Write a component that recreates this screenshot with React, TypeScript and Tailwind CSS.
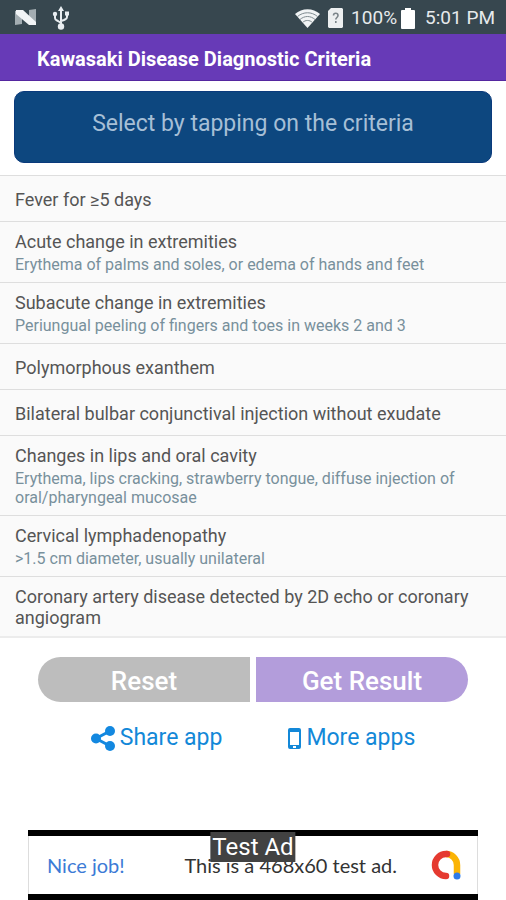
import { useState } from "react";

type Criterion = { title: string; detail?: string };

const criteria: Criterion[] = [
  { title: "Fever for ≥5 days" },
  {
    title: "Acute change in extremities",
    detail: "Erythema of palms and soles, or edema of hands and feet",
  },
  {
    title: "Subacute change in extremities",
    detail: "Periungual peeling of fingers and toes in weeks 2 and 3",
  },
  { title: "Polymorphous exanthem" },
  { title: "Bilateral bulbar conjunctival injection without exudate" },
  {
    title: "Changes in lips and oral cavity",
    detail:
      "Erythema, lips cracking, strawberry tongue, diffuse injection of oral/pharyngeal mucosae",
  },
  {
    title: "Cervical lymphadenopathy",
    detail: ">1.5 cm diameter, usually unilateral",
  },
  { title: "Coronary artery disease detected by 2D echo or coronary angiogram" },
];

function NougatIcon() {
  return (
    <svg viewBox="0 0 21 17" className="h-[17px] w-[21px]" aria-hidden="true">
      <path d="M0 2 7 1v14l-7 1zM14 1l7-1v15l-7 1z" fill="#a3adb2" />
      <path d="M1 1h7l13 12v3h-7L1 5z" fill="#f1f4f6" />
    </svg>
  );
}

function UsbIcon() {
  return (
    <svg viewBox="0 0 18 24" className="h-6 w-[18px]" fill="none" stroke="#e9eef1" strokeWidth="2" aria-hidden="true">
      <path d="M9 4v16M3 8v4c0 2 1 2 3 3l3 2M15 8v3c0 2-1 2-3 3l-3 1" />
      <path d="m9 0 3 5H6z" fill="#e9eef1" stroke="none" />
      <circle cx="9" cy="20.500" r="3.200" fill="#e9eef1" stroke="none" />
      <circle cx="3" cy="8" r="2.200" fill="#e9eef1" stroke="none" />
      <path d="M13 5.500h4v4h-4z" fill="#e9eef1" stroke="none" />
    </svg>
  );
}

function WifiIcon() {
  return (
    <svg viewBox="0 0 25 19" className="h-[19px] w-[25px]" aria-hidden="true">
      <path d="M0 5C7-1.500 18-1.500 25 5L12.500 19z" fill="#f1f4f5" />
      <g fill="none" stroke="#7f8b90" strokeWidth="1">
        <path d="M2.500 7.500c6-5 14-5 20 0M5 10.500c4.500-4 10.500-4 15 0M7.500 13.500c3-2.700 7-2.700 10 0" />
      </g>
    </svg>
  );
}

function SimUnknownIcon() {
  return (
    <svg viewBox="0 0 15 20" className="h-5 w-[15px]" aria-hidden="true">
      <path d="M3 0h11l1 1v18l-1 1H1l-1-1V3z" fill="#eceff0" />
      <path d="M5.500 7.500c0-3 4.500-3 4.500 0 0 2-2.200 2-2.200 4M7.800 13v2" fill="none" stroke="#7a8489" strokeWidth="1.600" />
    </svg>
  );
}

function BatteryIcon() {
  return (
    <svg viewBox="0 0 14 21" className="h-[21px] w-[14px]" aria-hidden="true">
      <path d="M4 0h6v2h3a1 1 0 0 1 1 1v17a1 1 0 0 1-1 1H1a1 1 0 0 1-1-1V3a1 1 0 0 1 1-1h3z" fill="#fff" />
    </svg>
  );
}

function ShareIcon() {
  return (
    <svg viewBox="0 0 24 25" className="h-[25px] w-6" fill="#1388e0" aria-hidden="true">
      <path d="M19 5 5 12.500 19 20" fill="none" stroke="#1388e0" strokeWidth="3" />
      <circle cx="19" cy="5" r="5" />
      <circle cx="5" cy="12.500" r="5" />
      <circle cx="19" cy="20" r="5" />
    </svg>
  );
}

function PhoneIcon() {
  return (
    <svg viewBox="0 0 13 21" className="h-[21px] w-[13px]" aria-hidden="true">
      <path
        fillRule="evenodd"
        d="M2 0h9a2 2 0 0 1 2 2v17a2 2 0 0 1-2 2H2a2 2 0 0 1-2-2V2a2 2 0 0 1 2-2zM2 4v13h9V4zM5 18v2h3v-2z"
        fill="#1388d8"
      />
    </svg>
  );
}

function AdMobLogo() {
  return (
    <svg viewBox="0 0 30 30" className="h-[30px] w-[30px]" fill="none" strokeWidth="6.500" aria-hidden="true">
      <path d="M15 4a11 11 0 0 1 11 11v9" stroke="#fbb405" />
      <path d="M16 4h-1a11 11 0 1 0 0 22" stroke="#e53a30" strokeLinecap="round" />
      <circle cx="26" cy="26" r="3.500" fill="#2f7be8" />
    </svg>
  );
}

export default function App() {
  const [selected, setSelected] = useState<number[]>([]);

  const toggle = (index: number) =>
    setSelected((current) =>
      current.includes(index) ? current.filter((i) => i !== index) : [...current, index],
    );

  return (
    <div className="flex min-h-screen flex-col bg-white font-['Roboto',sans-serif]">
      <div className="flex h-[34px] items-center justify-between bg-[#37474f] pr-[11px] pl-[15px] text-[19px] text-[#e6eaec]">
        <div className="flex items-center gap-4 pt-px">
          <NougatIcon />
          <UsbIcon />
        </div>
        <div className="flex items-center pt-[2px]">
          <WifiIcon />
          <span className="ml-2">
            <SimUnknownIcon />
          </span>
          <span className="ml-2">100%</span>
          <span className="ml-1">
            <BatteryIcon />
          </span>
          <span className="ml-[10px]">5:01 PM</span>
        </div>
      </div>

      <header className="flex h-[47px] items-center border-b border-[#5527a0] bg-[#673ab7] px-[37px] pt-1">
        <h1 className="text-xl font-bold text-white">Kawasaki Disease Diagnostic Criteria</h1>
      </header>

      <main>
        <p className="mx-[14px] mt-[10px] mb-3 flex h-[72px] items-center justify-center rounded-[10px] border border-[#0a3a7c] bg-[#0d477f] pb-[6px] text-[23px] text-[#a6bfd6]">
          Select by tapping on the criteria
        </p>

        <ul className="border-b-2 border-[#ececec]">
          {criteria.map((item, index) => (
            <li key={item.title} className="border-t border-[#dedede]">
              <button
                type="button"
                aria-pressed={selected.includes(index)}
                onClick={() => toggle(index)}
                className={`flex min-h-[45px] w-full flex-col justify-center gap-[3px] px-[15px] pt-[9px] pb-2 text-left ${
                  selected.includes(index) ? "bg-[#d1c4e9]" : "bg-[#fafafa]"
                }`}
              >
                <span className="text-lg leading-[21px] text-[#555555]">{item.title}</span>
                {item.detail && (
                  <span className="text-base leading-[19px] text-[#78909c]">{item.detail}</span>
                )}
              </button>
            </li>
          ))}
        </ul>

        <div className="mx-[38px] mt-[19px] grid grid-cols-2 gap-[6px] text-[26px] font-medium text-white">
          <button
            type="button"
            onClick={() => setSelected([])}
            className="h-[45px] rounded-l-full bg-[#bdbdbd] pt-1"
          >
            Reset
          </button>
          <button type="button" className="h-[45px] rounded-l-xs rounded-r-full bg-[#b39ddb] pt-1">
            Get Result
          </button>
        </div>

        <nav className="mt-5 flex justify-center gap-[66px] text-[23px] leading-8 text-[#1388d8]">
          <a href="#share" className="flex items-center gap-[5px]">
            <ShareIcon />
            Share app
          </a>
          <a href="#more" className="flex items-center gap-[5px]">
            <PhoneIcon />
            More apps
          </a>
        </nav>
      </main>

      <aside className="relative mx-7 mt-auto border-y-[6px] border-black font-['Lato',sans-serif]">
        <div className="flex h-[58px] items-center border-x border-[#dddddd] bg-white pr-4 pl-[18px] text-xl">
          <span className="text-[#3c7bd6]">Nice job!</span>
          <span className="ml-auto text-[#333333]">This is a 468x60 test ad.</span>
          <span className="ml-[34px]">
            <AdMobLogo />
          </span>
        </div>
        <span className="absolute -top-1 left-1/2 -translate-x-1/2 bg-[#424242] px-[2px] font-['Roboto',sans-serif] text-2xl leading-[30px] whitespace-nowrap text-white">
          Test Ad
        </span>
      </aside>
    </div>
  );
}
